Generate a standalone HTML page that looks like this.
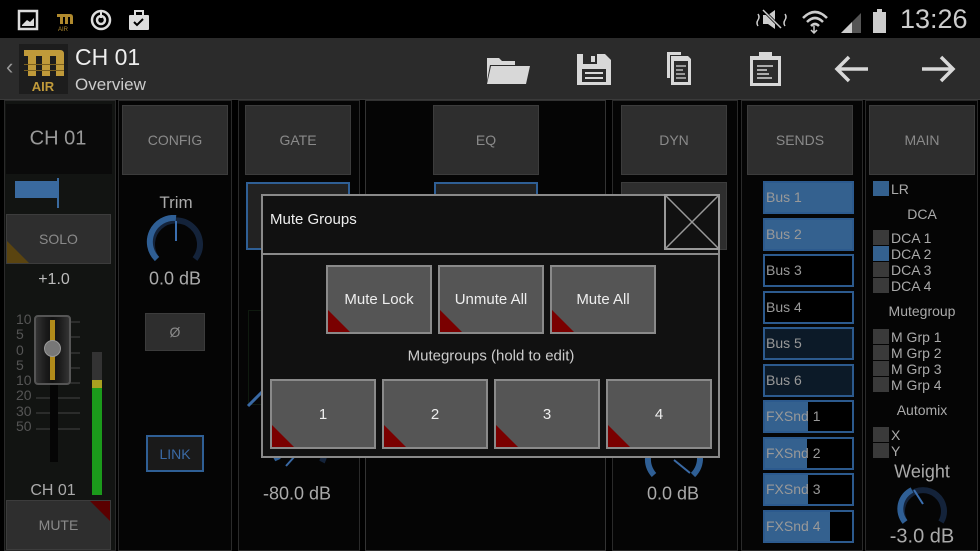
<!DOCTYPE html>
<html><head><meta charset="utf-8"><style>
*{margin:0;padding:0;box-sizing:border-box}
body{width:980px;height:551px;overflow:hidden;background:#000;font-family:"Liberation Sans",sans-serif;position:relative}
.a{position:absolute}
.t{position:absolute;white-space:nowrap;transform:translate(-50%,-50%)}
.btn{position:absolute;background:#2e2e2e;border:1.5px solid #3c3c3c;color:#8a8a8a;font-size:14px;display:flex;align-items:center;justify-content:center}
.col{position:absolute;top:100px;height:451px;border:1px solid #2a2a2a;background:#050505}
.db{background:#555;border:2px solid #8a8a8a;color:#eee;font-size:15px;display:flex;align-items:center;justify-content:center;position:absolute}
.db::after{content:"";position:absolute;left:0;bottom:0;border-left:22px solid #7a0000;border-top:22px solid transparent}
.snd{position:absolute;left:763px;width:91px;height:33px;border:2px solid #2c5a8e;color:#999;font-size:14px;line-height:29px;padding-left:1px;overflow:hidden}
.snd i{position:absolute;left:0;top:0;bottom:0;background:#34618f;z-index:0}
.snd span{position:relative}
.cb{position:absolute;left:873px;width:16px;height:15px;background:#3a3a3a}
.cl{position:absolute;left:891px;color:#aaa;font-size:14px;line-height:16px}
</style></head><body>
<div class="a" style="left:0;top:0;width:980px;height:38px;background:#000"></div>
<svg class="a" style="left:16px;top:8px" width="140" height="24" viewBox="0 0 140 24">
<rect x="3" y="3" width="18" height="18" fill="none" stroke="#ddd" stroke-width="2.5"/><path d="M6 17 L11 12 L14 14 L18 10 L18 18 L6 18Z" fill="#ddd"/>
<path d="M41 6 h13 q3 0 3 3 v7 h-3 v-7 h-2 v7 h-3 v-7 h-2 v7 h-3 v-7 h-3Z" fill="#b08a2e"/><text x="42" y="23" font-size="6" fill="#b08a2e" font-family="Liberation Sans">AIR</text>
<circle cx="85" cy="12" r="9" fill="none" stroke="#ddd" stroke-width="2.5"/><circle cx="85" cy="12" r="4" fill="none" stroke="#ddd" stroke-width="2.5"/><rect x="84" y="2" width="2" height="8" fill="#ddd"/>
<rect x="113" y="7" width="20" height="15" rx="1" fill="#ddd"/><rect x="119" y="3" width="8" height="5" fill="none" stroke="#ddd" stroke-width="2"/><path d="M118 14 l3 3 l6 -6" stroke="#000" stroke-width="2" fill="none"/>
</svg>
<svg class="a" style="left:755px;top:6px" width="140" height="28" viewBox="0 0 140 28">
<path d="M8 9 h5 l7 -5 v19 l-7 -5 h-5Z" fill="#ccc"/><path d="M8 4 L26 22" stroke="#000" stroke-width="3"/><path d="M8 4 L26 22" stroke="#ccc" stroke-width="1.5"/>
<path d="M3 8 q2 3 0 6 q-2 3 0 6 M30 8 q2 3 0 6 q-2 3 0 6" stroke="#ccc" stroke-width="1.5" fill="none"/>
<path d="M48 12 q12 -12 24 0 M52 16 q8 -8 16 0 M56 20 q4 -4 8 0" stroke="#ccc" stroke-width="2.5" fill="none"/>
<path d="M59 20 v7 M56 24 l3 3 l3 -3" stroke="#ccc" stroke-width="1.5" fill="none"/>
<path d="M86 27 L106 7 V27Z" fill="#555"/><path d="M86 27 L97 16 V27Z" fill="#ccc"/>
<rect x="118" y="6" width="13" height="21" fill="#ccc"/><rect x="122" y="3" width="5" height="3" fill="#ccc"/>
</svg>
<div class="a" style="left:900px;top:4px;color:#ccc;font-size:27px">13:26</div>
<div class="a" style="left:0;top:38px;width:980px;height:62px;background:#2b2b2b;border-bottom:1px solid #3a3a3a"></div>
<div class="a" style="left:6px;top:54px;color:#999;font-size:22px">‹</div>
<div class="a" style="left:19px;top:44px;width:49px;height:50px;background:#1d1d1d"></div>
<svg class="a" style="left:19px;top:44px" width="49" height="50" viewBox="0 0 49 50">
<path d="M5 6 h36 q4 0 4 4 v22 h-8 v-20 h-6 v20 h-8 v-20 h-6 v20 h-8 v-20 h-4Z" fill="#c09a3a"/>
<rect x="5" y="20" width="40" height="1" fill="#7a5f1f"/><rect x="5" y="26" width="40" height="1" fill="#7a5f1f"/>
<text x="24" y="47" font-size="13" font-weight="bold" fill="#c09a3a" text-anchor="middle" font-family="Liberation Sans">AIR</text>
</svg>
<div class="a" style="left:75px;top:44px;color:#eee;font-size:23px">CH 01</div>
<div class="a" style="left:75px;top:75px;color:#ccc;font-size:17px">Overview</div>
<svg class="a" style="left:484px;top:50px" width="480" height="40" viewBox="484 50 480 40">
<g fill="#d8d8d8">
<path d="M487 58 h12 l3 3 h13 v4 h-25 l-3 16Z"/><path d="M491 66 h39 l-4 18 h-39Z"/>
<path d="M577 54 h28 l6 6 v25 h-34Z"/>
<path d="M667 52 h14 v3 h-11 v23 h-3Z"/><path d="M671 56 h17 l3 3 v26 h-20Z"/>
<path d="M750 56 h31 v30 h-31Z"/><path d="M759 52 h13 v6 h-13Z"/>
</g>
<rect x="583" y="54" width="14" height="10" fill="#2b2b2b"/><rect x="591" y="56" width="4" height="6" fill="#d8d8d8"/>
<rect x="582" y="69" width="24" height="13" fill="#2b2b2b"/><path d="M585 73 h18 M585 78 h18" stroke="#d8d8d8" stroke-width="2"/>
<rect x="674" y="61" width="14" height="21" fill="#2b2b2b"/><path d="M676 66 h10 M676 70 h7 M676 74 h9 M676 78 h10" stroke="#d8d8d8" stroke-width="1.2"/>
<rect x="753" y="60" width="25" height="23" fill="#2b2b2b"/><path d="M757 66 h16 M757 70 h10 M757 74 h12 M757 78 h15" stroke="#d8d8d8" stroke-width="1.5"/><path d="M760 60 l5 -4 l5 4" fill="#d8d8d8"/>
<path d="M868 69 h-31 M849 57 l-12 12 l12 12" stroke="#d8d8d8" stroke-width="3.5" fill="none"/>
<path d="M922 69 h31 M941 57 l12 12 l-12 12" stroke="#d8d8d8" stroke-width="3.5" fill="none"/>
</svg>
<div class="col" style="left:4px;width:112px;background:#121412"></div>
<div class="a" style="left:6px;top:104px;width:106px;height:70px;background:#0a0a0a"></div>
<div class="col" style="left:118px;width:114px"></div>
<div class="col" style="left:238px;width:122px"></div>
<div class="col" style="left:365px;width:241px;border-color:#333"></div>
<div class="col" style="left:612px;width:126px"></div>
<div class="col" style="left:741px;width:122px"></div>
<div class="col" style="left:865px;width:113px"></div>
<div class="t" style="left:58px;top:139px;color:#999;font-size:20px">CH 01</div>
<div class="a" style="left:15px;top:181px;width:43px;height:17px;background:#3a6a9f"></div>
<div class="a" style="left:57px;top:178px;width:2px;height:30px;background:#3a6a9f"></div>
<div class="btn" style="left:6px;top:214px;width:105px;height:50px;overflow:hidden">SOLO<div class="a" style="left:0;bottom:0;border-left:22px solid #5a4410;border-top:22px solid transparent"></div></div>
<div class="t" style="left:54px;top:280px;color:#bbb;font-size:16px">+1.0</div>
<div class="a" style="left:16px;top:312px;color:#555;font-size:14px;line-height:15.3px">10<br>5<br>0<br>5<br>10<br>20<br>30<br>50</div>
<svg class="a" style="left:16px;top:312px" width="70" height="130"><g stroke="#444"><path d="M20 10 h44 M20 25 h44 M20 41 h44 M20 56 h44 M20 71 h44 M20 86 h44 M20 101 h44 M20 117 h44"/></g></svg>
<div class="a" style="left:50px;top:380px;width:8px;height:82px;background:#050505"></div>
<div class="a" style="left:34px;top:315px;width:37px;height:70px;background:linear-gradient(90deg,#333,#1a1a1a 30%,#111 50%,#1a1a1a 70%,#333);border:2px solid #555;border-radius:4px"></div>
<div class="a" style="left:50px;top:320px;width:5px;height:60px;background:#b08a1a"></div>
<div class="a" style="left:44px;top:340px;width:17px;height:17px;border-radius:50%;background:#777;border:1px solid #999"></div>
<div class="a" style="left:92px;top:352px;width:10px;height:143px;background:#333"></div>
<div class="a" style="left:92px;top:380px;width:10px;height:115px;background:#1b9a1b"></div>
<div class="a" style="left:92px;top:380px;width:10px;height:8px;background:#a8a020"></div>
<div class="t" style="left:53px;top:491px;color:#aaa;font-size:16px">CH 01</div>
<div class="btn" style="left:6px;top:500px;width:105px;height:50px;overflow:hidden">MUTE<div class="a" style="right:0;top:0;border-right:20px solid #5a0000;border-bottom:20px solid transparent"></div></div>
<div class="btn" style="left:122px;top:105px;width:106px;height:70px">CONFIG</div>
<div class="t" style="left:176px;top:203px;color:#aaa;font-size:17px">Trim</div>
<svg class="a" style="left:146px;top:215px" width="60" height="55"><path d="M11 44 A24 24 0 1 1 49 44" stroke="#14233a" stroke-width="6" fill="none"/><path d="M11 44 A24 24 0 0 1 30 3" stroke="#2f5f95" stroke-width="6" fill="none"/><path d="M30 6 v20" stroke="#3b6fb0" stroke-width="2"/></svg>
<div class="t" style="left:175px;top:279px;color:#aaa;font-size:18px">0.0 dB</div>
<div class="btn" style="left:145px;top:313px;width:60px;height:38px">Ø</div>
<div class="btn" style="left:146px;top:435px;width:58px;height:37px;border:2px solid #2f5f95;background:#1a1a1a;color:#3a6aa5">LINK</div>
<div class="btn" style="left:245px;top:105px;width:106px;height:70px">GATE</div>
<div class="a" style="left:246px;top:182px;width:104px;height:68px;border:2px solid #2f5f95;background:#222"></div>
<div class="a" style="left:248px;top:310px;width:14px;height:95px;border:1px solid #0f1a0f"></div>
<svg class="a" style="left:238px;top:380px" width="100" height="100"><path d="M10 26 L24 12" stroke="#3a6aa5" stroke-width="3"/><path d="M28 68 A24 24 0 0 1 40 80" stroke="#2f5f95" stroke-width="6" fill="none"/><path d="M48 86 L66 66" stroke="#3a6aa5" stroke-width="2"/><path d="M84 82 A24 24 0 0 0 86 66" stroke="#14233a" stroke-width="6" fill="none"/></svg>
<div class="t" style="left:297px;top:494px;color:#aaa;font-size:18px">-80.0 dB</div>
<div class="btn" style="left:433px;top:105px;width:106px;height:70px">EQ</div>
<div class="a" style="left:434px;top:182px;width:104px;height:14px;border:2px solid #2f5f95;border-bottom:none;background:#222"></div>
<div class="btn" style="left:621px;top:105px;width:106px;height:70px">DYN</div>
<div class="btn" style="left:621px;top:182px;width:106px;height:68px"></div>
<svg class="a" style="left:640px;top:455px" width="70" height="30"><path d="M8 2 A24 24 0 0 0 14 20" stroke="#2f5f95" stroke-width="6" fill="none"/><path d="M34 5 L50 18" stroke="#3a6aa5" stroke-width="2"/><path d="M60 2 A24 24 0 0 1 53 20" stroke="#2f5f95" stroke-width="6" fill="none"/></svg>
<div class="t" style="left:673px;top:494px;color:#aaa;font-size:18px">0.0 dB</div>
<div class="btn" style="left:747px;top:105px;width:106px;height:70px">SENDS</div>
<div class="snd" style="top:181px;background:#34618f">Bus 1</div>
<div class="snd" style="top:218px;background:#34618f">Bus 2</div>
<div class="snd" style="top:254px;background:#000">Bus 3</div>
<div class="snd" style="top:291px;background:#000">Bus 4</div>
<div class="snd" style="top:327px;background:#0c1a28">Bus 5</div>
<div class="snd" style="top:364px;background:#0c1a28">Bus 6</div>
<div class="snd" style="top:400px;background:#000"><i style="width:43px"></i><span>FXSnd 1</span></div>
<div class="snd" style="top:437px;background:#000"><i style="width:42px"></i><span>FXSnd 2</span></div>
<div class="snd" style="top:473px;background:#000"><i style="width:43px"></i><span>FXSnd 3</span></div>
<div class="snd" style="top:510px;background:#000"><i style="width:65px"></i><span>FXSnd 4</span></div>
<div class="btn" style="left:869px;top:105px;width:106px;height:70px">MAIN</div>
<div class="cb" style="top:181px;background:#34618f"></div><div class="cl" style="top:181px">LR</div>
<div class="t" style="left:922px;top:214px;color:#aaa;font-size:14px">DCA</div>
<div class="cb" style="top:230px"></div><div class="cl" style="top:230px">DCA 1</div>
<div class="cb" style="top:246px;background:#34618f"></div><div class="cl" style="top:246px">DCA 2</div>
<div class="cb" style="top:262px"></div><div class="cl" style="top:262px">DCA 3</div>
<div class="cb" style="top:278px"></div><div class="cl" style="top:278px">DCA 4</div>
<div class="t" style="left:922px;top:311px;color:#aaa;font-size:14px">Mutegroup</div>
<div class="cb" style="top:329px"></div><div class="cl" style="top:329px">M Grp 1</div>
<div class="cb" style="top:345px"></div><div class="cl" style="top:345px">M Grp 2</div>
<div class="cb" style="top:361px"></div><div class="cl" style="top:361px">M Grp 3</div>
<div class="cb" style="top:377px"></div><div class="cl" style="top:377px">M Grp 4</div>
<div class="t" style="left:922px;top:410px;color:#aaa;font-size:14px">Automix</div>
<div class="cb" style="top:427px"></div><div class="cl" style="top:427px">X</div>
<div class="cb" style="top:443px"></div><div class="cl" style="top:443px">Y</div>
<div class="t" style="left:922px;top:472px;color:#aaa;font-size:18px">Weight</div>
<svg class="a" style="left:896px;top:482px" width="54" height="46"><path d="M9 40 A21 21 0 1 1 45 40" stroke="#14233a" stroke-width="6" fill="none"/><path d="M9 40 A21 21 0 0 1 16 8" stroke="#2f5f95" stroke-width="6" fill="none"/><path d="M18 8 L27 22" stroke="#3b6fb0" stroke-width="2"/></svg>
<div class="t" style="left:922px;top:537px;color:#aaa;font-size:20px">-3.0 dB</div>
<div class="a" style="left:261px;top:194px;width:459px;height:264px;background:#111;border:2px solid #8a8a8a"></div>
<div class="a" style="left:261px;top:253px;width:459px;height:2px;background:#8a8a8a"></div>
<div class="a" style="left:270px;top:211px;color:#eee;font-size:15px">Mute Groups</div>
<svg class="a" style="left:664px;top:194px" width="56" height="56"><rect x="1" y="1" width="54" height="54" fill="#111" stroke="#999" stroke-width="2"/><path d="M2 2 L54 54 M54 2 L2 54" stroke="#999" stroke-width="1.5"/></svg>
<div class="db" style="left:326px;top:265px;width:106px;height:69px">Mute Lock</div>
<div class="db" style="left:438px;top:265px;width:106px;height:69px">Unmute All</div>
<div class="db" style="left:550px;top:265px;width:106px;height:69px">Mute All</div>
<div class="t" style="left:491px;top:356px;color:#ccc;font-size:15px">Mutegroups (hold to edit)</div>
<div class="db" style="left:270px;top:379px;width:106px;height:70px">1</div>
<div class="db" style="left:382px;top:379px;width:106px;height:70px">2</div>
<div class="db" style="left:494px;top:379px;width:106px;height:70px">3</div>
<div class="db" style="left:606px;top:379px;width:106px;height:70px">4</div>
</body></html>
